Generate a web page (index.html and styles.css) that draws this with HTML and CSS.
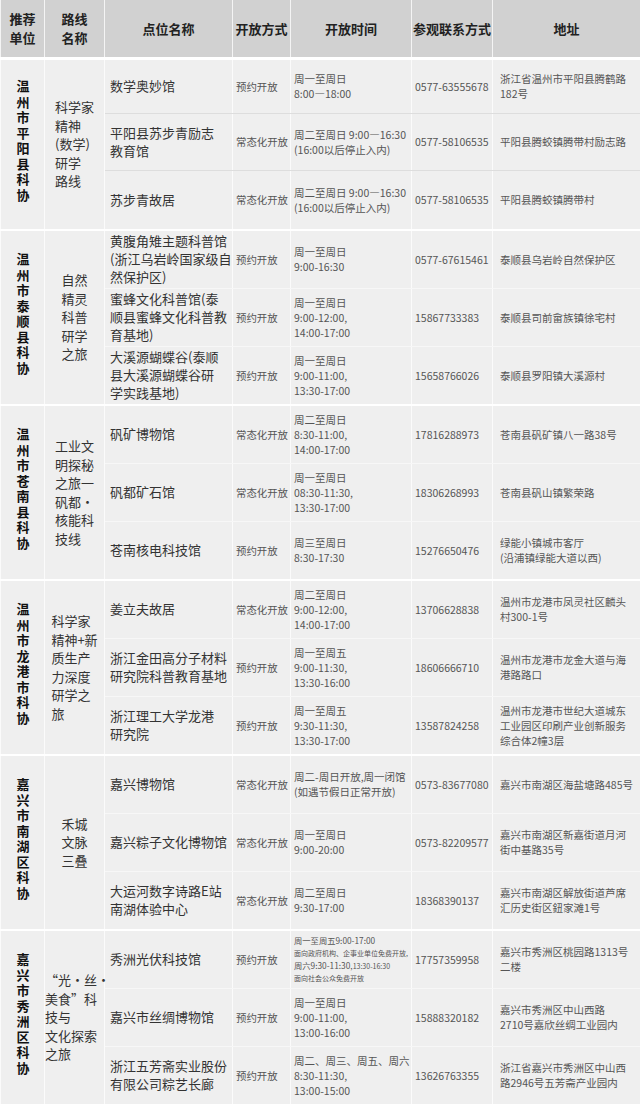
FILE: index.html
```html
<!DOCTYPE html>
<html lang="zh-CN">
<head>
<meta charset="utf-8">
<title>科普研学路线</title>
<link rel="stylesheet" href="styles.css">
</head>
<body>
<table class="tbl">
<colgroup>
<col class="c1"><col class="c2"><col class="c3"><col class="c4"><col class="c5"><col class="c6"><col class="c7">
</colgroup>
<thead>
<tr class="head">
<th>推荐<br>单位</th><th>路线<br>名称</th><th>点位名称</th><th>开放方式</th><th>开放时间</th><th>参观联系方式</th><th>地址</th>
</tr>
</thead>
<tbody>
<tr class="r-a">
<td class="org" rowspan="3"><span class="vt">温州市平阳县科协</span></td>
<td class="route" rowspan="3"><span class="rt">科学家<br>精神<br>(数学)<br>研学<br>路线</span></td>
<td class="name">数学奥妙馆</td><td class="mode">预约开放</td><td class="time">周一至周日<br>8:00—18:00</td><td class="tel">0577-63555678</td><td class="addr">浙江省温州市平阳县腾鹤路<br>182号</td>
</tr>
<tr class="r-b">
<td class="name">平阳县苏步青励志<br>教育馆</td><td class="mode">常态化开放</td><td class="time">周二至周日 9:00—16:30<br>(16:00以后停止入内)</td><td class="tel">0577-58106535</td><td class="addr">平阳县腾蛟镇腾带村励志路</td>
</tr>
<tr class="r-c">
<td class="name">苏步青故居</td><td class="mode">常态化开放</td><td class="time">周二至周日 9:00—16:30<br>(16:00以后停止入内)</td><td class="tel">0577-58106535</td><td class="addr">平阳县腾蛟镇腾带村</td>
</tr>

<tr class="r">
<td class="org" rowspan="3"><span class="vt">温州市泰顺县科协</span></td>
<td class="route" rowspan="3"><span class="rt">自然<br>精灵<br>科普<br>研学<br>之旅</span></td>
<td class="name">黄腹角雉主题科普馆<br>(浙江乌岩岭国家级自<br>然保护区)</td><td class="mode">预约开放</td><td class="time">周一至周日<br>9:00-16:30</td><td class="tel">0577-67615461</td><td class="addr">泰顺县乌岩岭自然保护区</td>
</tr>
<tr class="r">
<td class="name">蜜蜂文化科普馆(泰<br>顺县蜜蜂文化科普教<br>育基地)</td><td class="mode">预约开放</td><td class="time">周一至周日<br>9:00-12:00,<br>14:00-17:00</td><td class="tel">15867733383</td><td class="addr">泰顺县司前畲族镇徐宅村</td>
</tr>
<tr class="r-l">
<td class="name">大溪源蝴蝶谷(泰顺<br>县大溪源蝴蝶谷研<br>学实践基地)</td><td class="mode">预约开放</td><td class="time">周一至周日<br>9:00-11:00,<br>13:30-17:00</td><td class="tel">15658766026</td><td class="addr">泰顺县罗阳镇大溪源村</td>
</tr>

<tr class="r">
<td class="org" rowspan="3"><span class="vt">温州市苍南县科协</span></td>
<td class="route" rowspan="3"><span class="rt">工业文<br>明探秘<br>之旅一<br>矾都·<br>核能科<br>技线</span></td>
<td class="name">矾矿博物馆</td><td class="mode">常态化开放</td><td class="time">周二至周日<br>8:30-11:00,<br>14:00-17:00</td><td class="tel">17816288973</td><td class="addr">苍南县矾矿镇八一路38号</td>
</tr>
<tr class="r">
<td class="name">矾都矿石馆</td><td class="mode">常态化开放</td><td class="time">周一至周日<br>08:30-11:30,<br>13:30-17:00</td><td class="tel">18306268993</td><td class="addr">苍南县矾山镇繁荣路</td>
</tr>
<tr class="r-l">
<td class="name">苍南核电科技馆</td><td class="mode">预约开放</td><td class="time">周三至周日<br>8:30-17:30</td><td class="tel">15276650476</td><td class="addr">绿能小镇城市客厅<br>(沿浦镇绿能大道以西)</td>
</tr>

<tr class="r">
<td class="org" rowspan="3"><span class="vt">温州市龙港市科协</span></td>
<td class="route" rowspan="3"><span class="rt">科学家<br>精神+新<br>质生产<br>力深度<br>研学之<br>旅</span></td>
<td class="name">姜立夫故居</td><td class="mode">常态化开放</td><td class="time">周二至周日<br>9:00-12:00,<br>14:00-17:00</td><td class="tel">13706628838</td><td class="addr">温州市龙港市凤灵社区麟头<br>村300-1号</td>
</tr>
<tr class="r">
<td class="name">浙江金田高分子材料<br>研究院科普教育基地</td><td class="mode">预约开放</td><td class="time">周一至周五<br>9:00-11:30,<br>13:30-16:00</td><td class="tel">18606666710</td><td class="addr">温州市龙港市龙金大道与海<br>港路路口</td>
</tr>
<tr class="r-l">
<td class="name">浙江理工大学龙港<br>研究院</td><td class="mode">预约开放</td><td class="time">周一至周五<br>9:30-11:30,<br>13:30-17:00</td><td class="tel">13587824258</td><td class="addr">温州市龙港市世纪大道城东<br>工业园区印刷产业创新服务<br>综合体2幢3层</td>
</tr>

<tr class="r">
<td class="org" rowspan="3"><span class="vt">嘉兴市南湖区科协</span></td>
<td class="route" rowspan="3"><span class="rt">禾城<br>文脉<br>三叠</span></td>
<td class="name">嘉兴博物馆</td><td class="mode">常态化开放</td><td class="time">周二-周日开放,周一闭馆<br>(如遇节假日正常开放)</td><td class="tel">0573-83677080</td><td class="addr">嘉兴市南湖区海盐塘路485号</td>
</tr>
<tr class="r">
<td class="name">嘉兴粽子文化博物馆</td><td class="mode">常态化开放</td><td class="time">周一至周日<br>9:00-20:00</td><td class="tel">0573-82209577</td><td class="addr">嘉兴市南湖区新嘉街道月河<br>街中基路35号</td>
</tr>
<tr class="r-l">
<td class="name">大运河数字诗路E站<br>南湖体验中心</td><td class="mode">常态化开放</td><td class="time">周二至周日<br>9:30-17:00</td><td class="tel">18368390137</td><td class="addr">嘉兴市南湖区解放街道芦席<br>汇历史街区鈕家滩1号</td>
</tr>

<tr class="r">
<td class="org" rowspan="3"><span class="vt">嘉兴市秀洲区科协</span></td>
<td class="route" rowspan="3"><span class="rt">“光·丝·<br>美食”科<br>技与<br>文化探索<br>之旅</span></td>
<td class="name">秀洲光伏科技馆</td><td class="mode">预约开放</td><td class="time tiny"><span class="t1">周一至周五9:00-17:00</span><br>面向政府机构、企事业单位免费开放,<br><span class="t1">周六9:30-11:30,</span>13:30-16:30<br>面向社会公众免费开放</td><td class="tel">17757359958</td><td class="addr">嘉兴市秀洲区桃园路1313号<br>二楼</td>
</tr>
<tr class="r">
<td class="name">嘉兴市丝绸博物馆</td><td class="mode">预约开放</td><td class="time">周一至周日<br>9:00-11:00,<br>13:00-16:00</td><td class="tel">15888320182</td><td class="addr">嘉兴市秀洲区中山西路<br>2710号嘉欣丝绸工业园内</td>
</tr>
<tr class="r-l">
<td class="name">浙江五芳斋实业股份<br>有限公司粽艺长廊</td><td class="mode">预约开放</td><td class="time">周二、周三、周五、周六<br>8:30-11:30,<br>13:00-15:00</td><td class="tel">13626763355</td><td class="addr">浙江省嘉兴市秀洲区中山西<br>路2946号五芳斋产业园内</td>
</tr>
</tbody>
</table>
</body>
</html>
```
FILE: styles.css
```css
html, body {
  margin: 0;
  padding: 0;
  background: #ffffff;
}
body {
  width: 640px;
  font-family: "Noto Sans CJK SC", "Noto Sans", sans-serif;
  color: #444;
}
.tbl {
  width: 640px;
  table-layout: fixed;
  border-collapse: collapse;
}
.c1 { width: 44px; }
.c2 { width: 60px; }
.c3 { width: 128px; }
.c4 { width: 58px; }
.c5 { width: 121px; }
.c6 { width: 81px; }
.c7 { width: 148px; }

.head { height: 58px; }
.head th {
  background: #d1d1d1;
  color: #222;
  font-size: 13px;
  line-height: 19px;
  font-weight: 700;
  border-left: 1px solid #f4f4f4;
  border-right: 1px solid #f4f4f4;
  border-bottom: 3px solid #ffffff;
  padding: 0;
  text-align: center;
  vertical-align: middle;
}
td {
  background: #efefef;
  border: 1px solid #fbfbfb;
  padding: 0;
  vertical-align: middle;
}
.r-a { height: 55px; }
.r-b { height: 57px; }
.r-c { height: 60px; border-bottom: 2px solid #fff; }
.r { height: 58px; }
.r-l { height: 59px; border-bottom: 2px solid #fff; }
.r-a td, .r-b td { border-bottom-color: #dddddd; }
.r td { border-bottom-color: #f7f7f7; }

.org {
  text-align: center;
}
.vt {
  display: inline-block;
  writing-mode: vertical-rl;
  text-orientation: upright;
  font-weight: 700;
  color: #111;
  font-size: 13px;
  letter-spacing: 2.5px;
  line-height: 16px;
}
.route {
  text-align: center;
  color: #333;
  font-size: 13px;
  line-height: 18.5px;
}
.rt {
  display: inline-block;
  text-align: left;
  white-space: nowrap;
}
.name {
  color: #333;
  font-size: 13px;
  line-height: 18px;
  padding: 0 2px 0 5px;
  white-space: nowrap;
}
.mode {
  font-size: 10.4px;
  color: #555;
  padding-left: 3px;
  white-space: nowrap;
}
.time {
  font-size: 10.5px;
  line-height: 15px;
  color: #555;
  padding-left: 3px;
  white-space: nowrap;
}
.time.tiny {
  font-size: 7px;
  line-height: 12px;
}
.time.tiny .t1 {
  font-size: 8.3px;
}
.tel {
  font-size: 10.5px;
  color: #555;
  padding-left: 3px;
  white-space: nowrap;
}
.addr {
  font-size: 10.5px;
  line-height: 15px;
  color: #555;
  padding: 0 2px 0 7px;
  white-space: nowrap;
}
```
